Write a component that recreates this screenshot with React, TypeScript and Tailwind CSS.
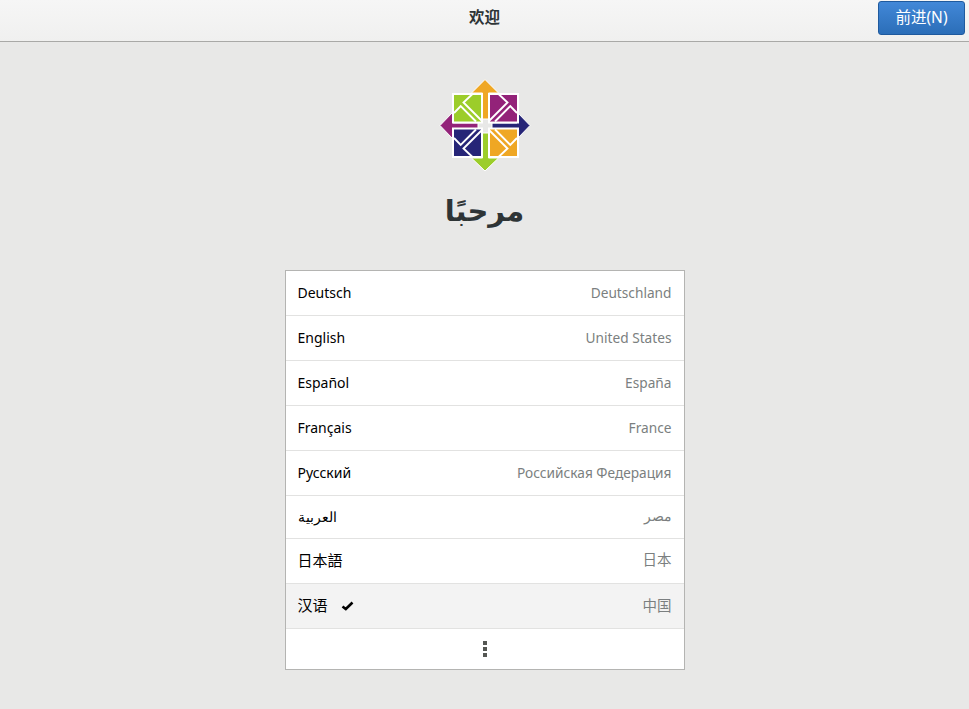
const FONT = "font-['Noto_Sans','Noto_Sans_CJK_SC',sans-serif]";

const rows = [
  { name: "Deutsch", region: "Deutschland", height: "h-[45px]", size: "text-[14px]", regionSize: "text-[13.7px]" },
  { name: "English", region: "United States", height: "h-[45px]", size: "text-[14px]", regionSize: "text-[13.7px]" },
  { name: "Español", region: "España", height: "h-[45px]", size: "text-[14px]", regionSize: "text-[13.7px]" },
  { name: "Français", region: "France", height: "h-[45px]", size: "text-[14px]", regionSize: "text-[13.7px]" },
  { name: "Русский", region: "Российская Федерация", height: "h-[45px]", size: "text-[14px]", regionSize: "text-[13.7px]" },
  { name: "العربية", region: "مصر", height: "h-[43px]", size: "text-[14px]", regionSize: "text-[13.7px] -mt-[2px]" },
  { name: "日本語", region: "日本", height: "h-[45px]", size: "text-[15px]", regionSize: "text-[14.5px] -mt-[2px]" },
  { name: "汉语", region: "中国", height: "h-[45px]", size: "text-[15px]", regionSize: "text-[14.5px]", selected: true },
];

function Quadrant({ color, transform }: { color: string; transform: string }) {
  return (
    <g transform={transform}>
      <rect x="13" y="14" width="29" height="28.5" fill={color} stroke="#fff" strokeWidth="2" />
      <path d="M32.5 14L23.5 22.5L41.5 40.5M14 33L20.7 26L36 41.5" fill="none" stroke="#fff" strokeWidth="1.9" />
    </g>
  );
}

function Logo() {
  return (
    <svg width="92" height="92" viewBox="-1 -1 92 92" className="-mx-px">
      <path d="M45 -0.5L58.5 13H48.5V39H42.5V13H31.5Z" fill="#efa724" stroke="#fff" strokeWidth="1" />
      <path d="M90 45.5L77 32V43H52V48.5H77V59Z" fill="#262577" stroke="#fff" strokeWidth="1" />
      <path d="M45 91L31.5 78H42.5V53H48.5V78H58.5Z" fill="#9ccd2a" stroke="#fff" strokeWidth="1" />
      <path d="M0 45.5L13 32V43H38V48.5H13V59Z" fill="#932279" stroke="#fff" strokeWidth="1" />
      <Quadrant color="#9ccd2a" transform="" />
      <Quadrant color="#932279" transform="translate(91 0) scale(-1 1)" />
      <Quadrant color="#262577" transform="translate(0 91) scale(1 -1)" />
      <Quadrant color="#efa724" transform="translate(91 91) scale(-1 -1)" />
    </svg>
  );
}

export default function App() {
  return (
    <div className={`${FONT} w-[969px] h-[709px] overflow-hidden bg-[#e8e8e7] flex flex-col`}>
      <header className="h-[42px] shrink-0 relative flex items-center justify-center bg-gradient-to-b from-[#f6f6f6] to-[#f0f0ef] border-b border-[#a9a9a7]">
        <span className="text-[15.5px] font-bold text-[#2e3436] -mt-[6px]">欢迎</span>
        <button className="absolute right-[4px] top-[1px] w-[87px] h-[34px] rounded-[3px] border border-[#1f5a9e] bg-gradient-to-b from-[#4288d8] to-[#2b6eb8] text-white text-[15.5px]">
          前进(N)
        </button>
      </header>
      <main className="flex-1 flex flex-col items-center">
        <div className="mt-[37px]">
          <Logo />
        </div>
        <h1 className="mt-[20px] h-[40px] leading-[40px] text-[29px] font-bold text-[#2e3436] font-['DejaVu_Sans',sans-serif]">مرحبًا</h1>
        <div className="mt-[39px] w-[400px] h-[400px] bg-white border border-[#b4b4b2] flex flex-col">
          {rows.map((row) => (
            <div
              key={row.name}
              className={`${row.height} shrink-0 px-3 flex items-center justify-between border-b border-[#e2e2e1] ${row.selected ? "bg-[#f3f3f3]" : ""}`}
            >
              <div className="flex items-center -mt-[2px]">
                <span className={`${row.size} text-black`}>{row.name}</span>
                {row.selected && (
                  <svg width="13" height="10" viewBox="0 0 13 10" className="ml-[13px] mt-[2px]">
                    <path d="M1.5 5.5L4.8 8L11.5 1.5" fill="none" stroke="#000" strokeWidth="2.6" />
                  </svg>
                )}
              </div>
              <span className={`${row.regionSize} text-[#7b7f80]`}>{row.region}</span>
            </div>
          ))}
          <div className="flex-1 flex flex-col items-center justify-center gap-[2px]">
            <span className="size-[4px] bg-[#555753]" />
            <span className="size-[4px] bg-[#555753]" />
            <span className="size-[4px] bg-[#555753]" />
          </div>
        </div>
      </main>
    </div>
  );
}
